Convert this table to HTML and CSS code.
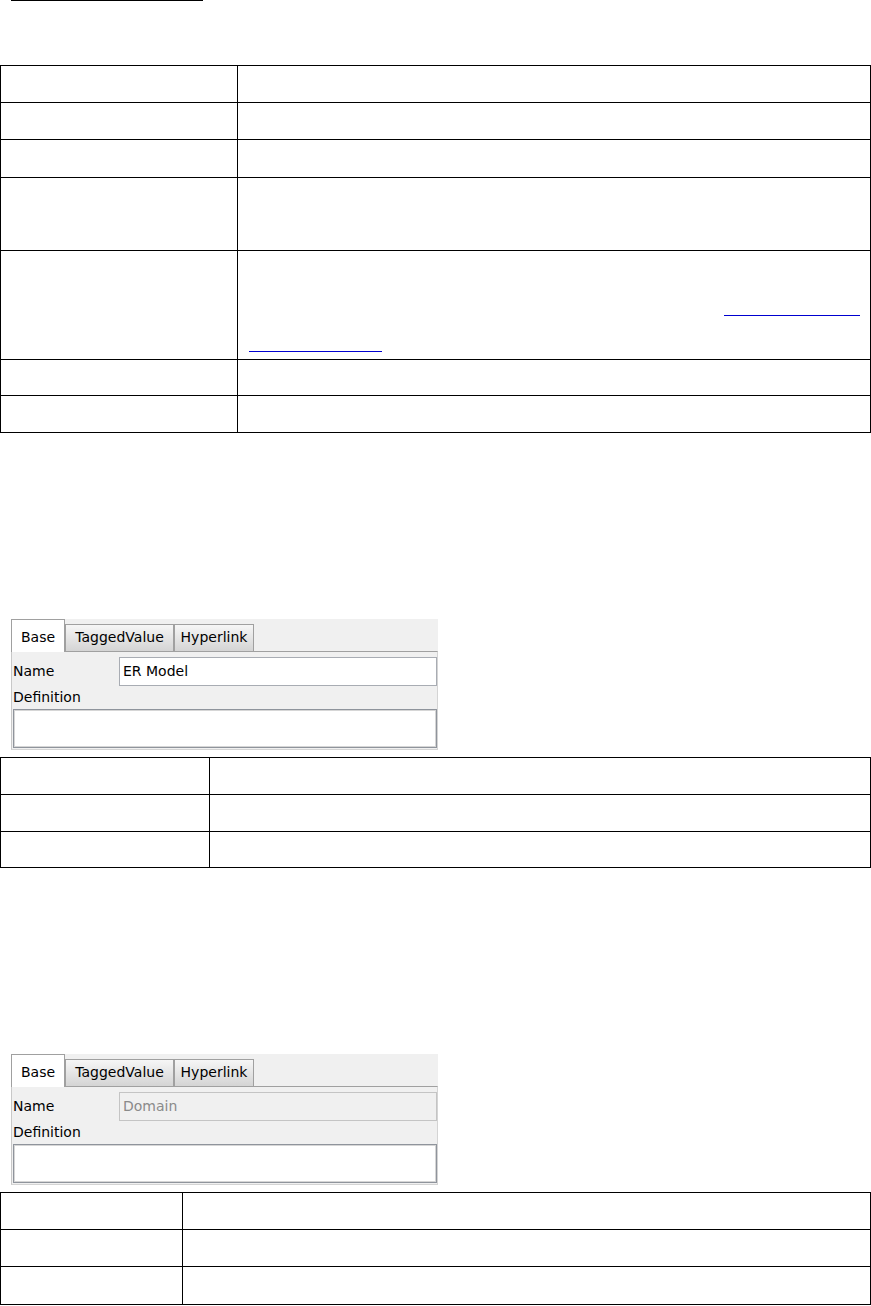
FILE: index.html
```html
<!DOCTYPE html>
<html lang="en">
<head>
    <meta charset="UTF-8">
    <meta name="viewport" content="width=device-width, initial-scale=1.0">
    <title>Model properties</title>
    <link rel="stylesheet" href="styles.css">
</head>
<body>
    <div class="page-link"></div>

    <table class="props props-wide">
        <colgroup><col class="key-col"><col></colgroup>
        <tr><td></td><td></td></tr>
        <tr><td></td><td></td></tr>
        <tr class="tall"><td></td><td></td></tr>
        <tr class="two"><td></td><td></td></tr>
        <tr class="three">
            <td></td>
            <td>
                <div class="cell-line"></div>
                <div class="cell-line"><span class="link-ul link-start"></span></div>
                <div class="cell-line"><span class="link-ul link-end"></span></div>
            </td>
        </tr>
        <tr class="short"><td></td><td></td></tr>
        <tr><td></td><td></td></tr>
    </table>

    <!-- properties dialog: ER model -->
    <div class="panel">
        <div class="tabs">
            <div class="tab active">Base</div>
            <div class="tab tagged">TaggedValue</div>
            <div class="tab hyper">Hyperlink</div>
        </div>
        <div class="panel-body">
            <div class="field-row">
                <label class="field-label">Name</label>
                <div class="field">ER Model</div>
            </div>
            <div class="field-label block">Definition</div>
            <div class="area"></div>
        </div>
    </div>

    <table class="props props-mid">
        <colgroup><col class="key-col"><col></colgroup>
        <tr><td></td><td></td></tr>
        <tr><td></td><td></td></tr>
        <tr class="short"><td></td><td></td></tr>
    </table>

    <!-- properties dialog: domain -->
    <div class="panel">
        <div class="tabs">
            <div class="tab active">Base</div>
            <div class="tab tagged">TaggedValue</div>
            <div class="tab hyper">Hyperlink</div>
        </div>
        <div class="panel-body">
            <div class="field-row">
                <label class="field-label">Name</label>
                <div class="field disabled">Domain</div>
            </div>
            <div class="field-label block">Definition</div>
            <div class="area"></div>
        </div>
    </div>

    <table class="props props-narrow">
        <colgroup><col class="key-col"><col></colgroup>
        <tr><td></td><td></td></tr>
        <tr><td></td><td></td></tr>
        <tr class="tall"><td></td><td></td></tr>
    </table>
</body>
</html>
```

FILE: styles.css
```css
* {
    box-sizing: border-box;
}

body {
    margin: 0;
    background: #ffffff;
    color: #000000;
    font-family: "Liberation Serif", serif;
}

.page-link {
    width: 192px;
    margin-left: 11px;
    border-top: 1px solid #000000;
}

/* document tables */
.props {
    width: 871px;
    border-collapse: collapse;
    table-layout: fixed;
}

.props td {
    border: 1px solid #000000;
    padding: 0;
    height: 37px;
    vertical-align: top;
}

.props .short td {
    height: 36px;
}

.props .tall td {
    height: 38px;
}

.props .two td {
    height: 73px;
}

.props .three td {
    height: 109px;
}

.props-wide {
    margin-top: 64px;
}

.props-wide .key-col {
    width: 237px;
}

.props-mid {
    margin-top: 7px;
}

.props-mid .key-col {
    width: 209px;
}

.props-narrow {
    margin-top: 7px;
}

.props-narrow .key-col {
    width: 182px;
}

.cell-line {
    height: 36px;
}

.link-ul {
    display: block;
    height: 29px;
    border-bottom: 1px solid #0000d0;
}

.link-start {
    margin-left: 486px;
    width: 136px;
}

.link-end {
    margin-left: 11px;
    width: 133px;
}

/* dialog screenshots */
.panel {
    width: 427px;
    margin: 186px 0 0 11px;
    font-family: "DejaVu Sans", sans-serif;
    font-size: 14px;
    color: #000000;
}

.tabs {
    display: flex;
    align-items: flex-end;
    height: 32px;
    background: #f0f0f0;
}

.tab {
    height: 27px;
    line-height: 25px;
    text-align: center;
    border: 1px solid #a0a0a0;
    border-bottom: none;
    background: linear-gradient(#f6f6f6, #d4d4d4);
    white-space: nowrap;
}

.tab.tagged {
    width: 109px;
}

.tab.hyper {
    width: 80px;
}

.tab.active {
    position: relative;
    z-index: 1;
    width: 54px;
    height: 33px;
    margin-bottom: -1px;
    padding-top: 5px;
    background: #ffffff;
}

.panel-body {
    background: #f0f0f0;
    border-top: 1px solid #a0a0a0;
    border-left: 1px solid #c8c8c8;
    border-right: 1px solid #d4d4d4;
    border-bottom: 1px solid #d4d4d4;
    padding-bottom: 1px;
}

.field-row {
    display: flex;
    padding-top: 5px;
}

.field-label {
    width: 107px;
    padding-left: 1px;
    line-height: 29px;
}

.field-label.block {
    width: auto;
    height: 23px;
    line-height: 23px;
}

.field {
    width: 318px;
    height: 29px;
    padding-left: 3px;
    line-height: 27px;
    background: #ffffff;
    border: 1px solid #a8acb3;
}

.field.disabled {
    background: #f0f0f0;
    border-color: #c4c4c4;
    color: #8a8a8a;
}

.area {
    width: 424px;
    height: 39px;
    margin-left: 1px;
    background: #ffffff;
    border: 1px solid #8f949c;
    box-shadow: inset 0 0 0 1px #d6d6d6;
}
```
